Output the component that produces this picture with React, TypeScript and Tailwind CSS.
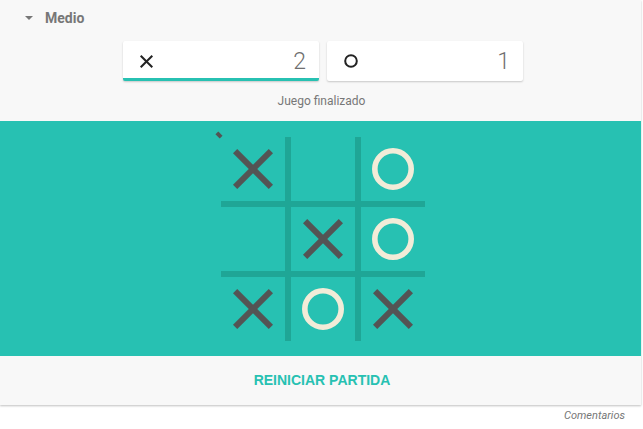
import React from "react";

const XMark = ({ size = 40, stroke = 6, color = "#545454" }: { size?: number; stroke?: number; color?: string }) => {
  const a = stroke * 0.354;
  return (
    <svg width={size} height={size} viewBox={`0 0 ${size} ${size}`}>
      <line x1={a} y1={a} x2={size - a} y2={size - a} stroke={color} strokeWidth={stroke} />
      <line x1={size - a} y1={a} x2={a} y2={size - a} stroke={color} strokeWidth={stroke} />
    </svg>
  );
};

const OMark = () => (
  <svg width={42} height={42} viewBox="0 0 42 42">
    <circle cx={21} cy={21} r={18.2} fill="none" stroke="#f2ecd8" strokeWidth={5.6} />
  </svg>
);

const board: ("x" | "o" | "")[] = ["x", "", "o", "", "x", "o", "x", "o", "x"];

export default function App() {
  return (
    <div className="w-[643px] h-[429px] bg-white overflow-hidden" style={{ fontFamily: "Roboto, Arial, sans-serif" }}>
      <div className="w-[641px] bg-[#f8f8f8] shadow-[0_1px_2px_rgba(0,0,0,0.25)] flex flex-col">
        <div className="h-[35px] flex items-center pl-[25px]">
          <div className="w-0 h-0 border-l-[4px] border-r-[4px] border-t-[4px] border-l-transparent border-r-transparent border-t-[#777]" />
          <span className="ml-[12px] text-[14px] font-bold text-[#777] leading-none">Medio</span>
        </div>
        <div className="flex gap-[8px] pl-[123px] mt-[6px]">
          <div className="w-[196px] h-[40px] bg-white rounded-[2px] shadow-[0_1px_2px_rgba(0,0,0,0.2)] border-b-[3px] border-[#27c1b2] flex items-center justify-between pl-[17px] pr-[13px] pt-[3px]">
            <XMark size={13} stroke={2} color="#222" />
            <span className="text-[23px] font-light text-[#6f6f6f] leading-none">2</span>
          </div>
          <div className="w-[196px] h-[40px] bg-white rounded-[2px] shadow-[0_1px_2px_rgba(0,0,0,0.2)] flex items-center justify-between pl-[17px] pr-[13px]">
            <svg width={14} height={14} viewBox="0 0 14 14">
              <circle cx={7} cy={7} r={5.8} fill="none" stroke="#222" strokeWidth={2} />
            </svg>
            <span className="text-[23px] font-light text-[#6f6f6f] leading-none">1</span>
          </div>
        </div>
        <div className="h-[40px] flex items-center justify-center text-[12px] text-[#777] pl-[2px]">Juego finalizado</div>
        <div className="h-[235px] bg-[#27c1b2] flex justify-center pt-[16px] pr-[1px]">
          <div className="relative w-[204px] h-[204px] ml-[6px]">
            <div className="absolute left-[-5px] top-[-4px] w-[6px] h-[4px] bg-[#545454] rotate-45" />
            <div className="w-[204px] h-[204px] bg-[#1fa696] grid grid-cols-[64px_64px_64px] grid-rows-[64px_64px_64px] gap-[6px]">
              {board.map((c, i) => (
                <div key={i} className="bg-[#27c1b2] flex items-center justify-center">
                  {c === "x" && <XMark />}
                  {c === "o" && <OMark />}
                </div>
              ))}
            </div>
          </div>
        </div>
        <div className="h-[49px] flex items-center justify-center pl-[3px]">
          <span className="text-[14px] font-bold text-[#27c1b2]" style={{ fontFamily: '"Liberation Sans", Arial, sans-serif' }}>REINICIAR PARTIDA</span>
        </div>
      </div>
      <div className="flex justify-end pr-[18px] pt-[3px]">
        <span className="text-[11px] italic text-[#777]">Comentarios</span>
      </div>
    </div>
  );
}
